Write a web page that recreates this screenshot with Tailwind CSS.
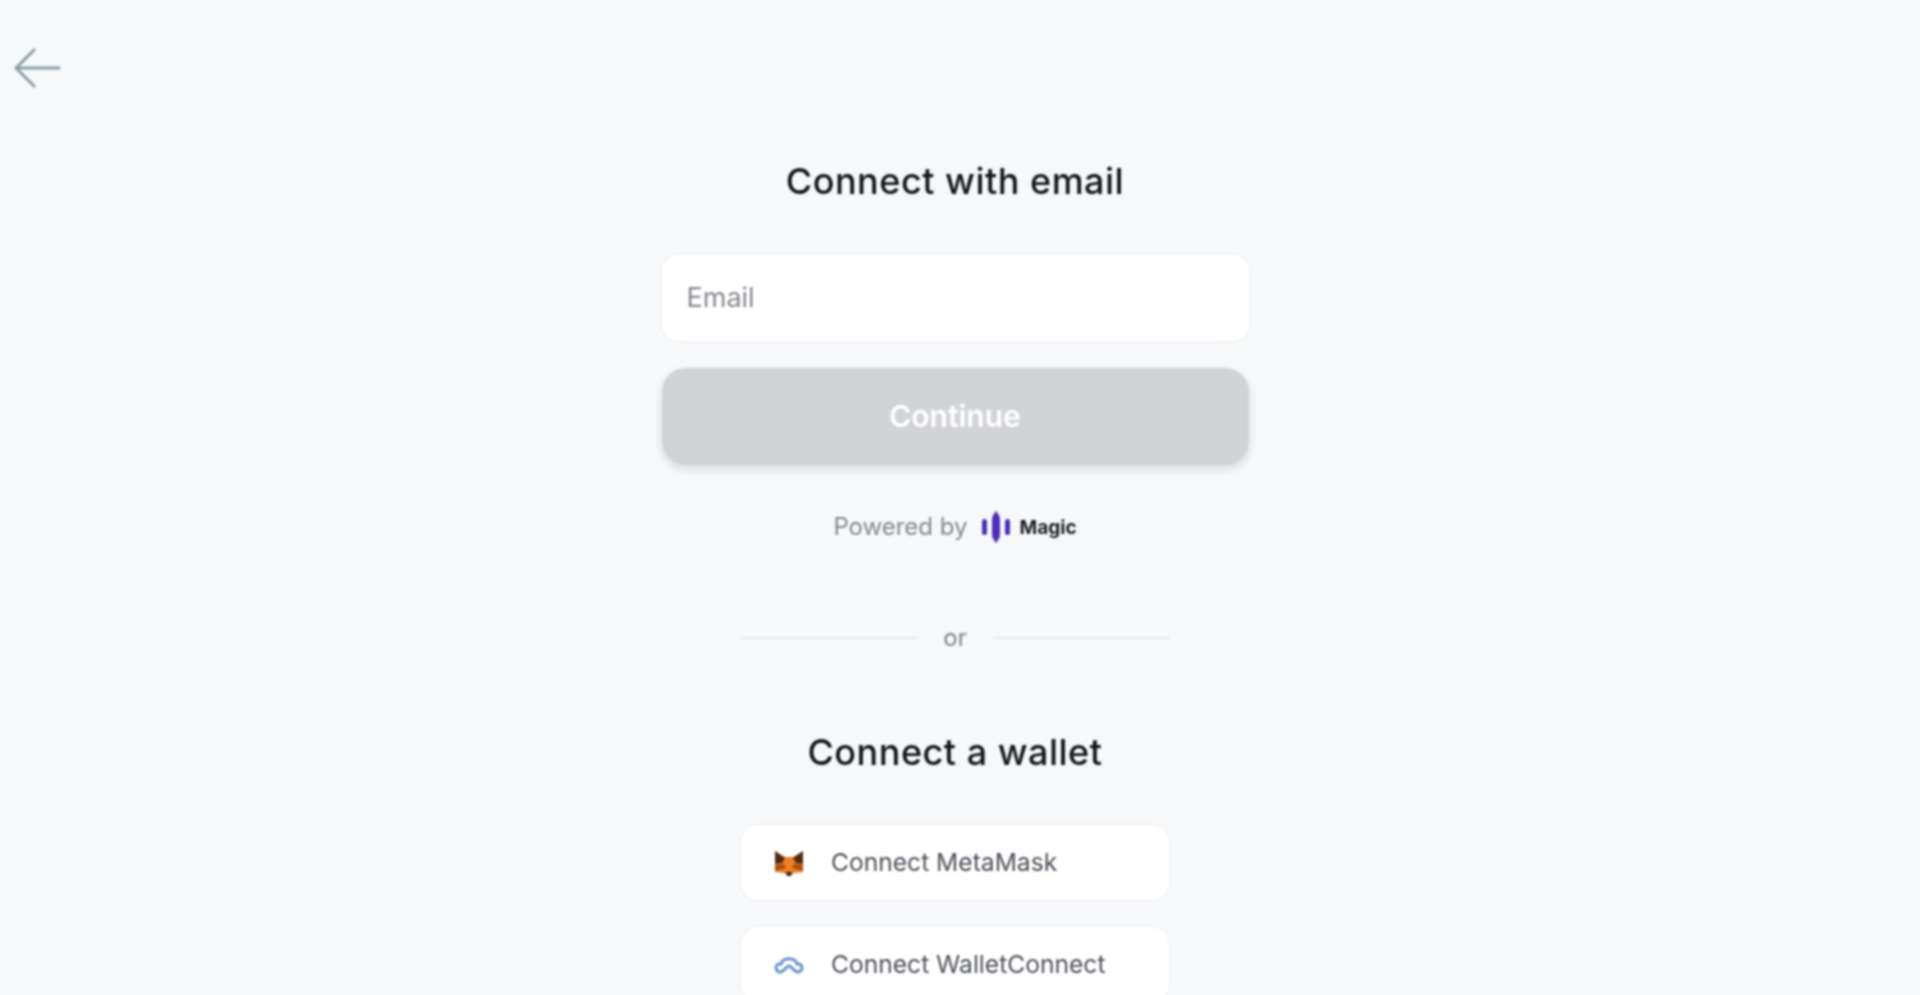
<!DOCTYPE html>
<html lang="en">
<head>
  <meta charset="UTF-8" />
  <title>Connect</title>
  <script src="https://cdn.jsdelivr.net/npm/@tailwindcss/browser@4"></script>
</head>
<body class="bg-[#f6f8fa] h-screen overflow-hidden font-['Inter',sans-serif]">
  <div class="blur-[0.8px]">
    <header class="h-[159px] pt-[46px] pl-[12px]">
      <button type="button" aria-label="Back" class="block text-[#8c9ea6]">
        <svg class="w-[50px] h-[44px]" viewBox="0 0 50 44" fill="none" stroke="currentColor" stroke-width="3" stroke-linecap="round" stroke-linejoin="round">
          <path d="M47 22H4M22 4 4 22l18 18" />
        </svg>
      </button>
    </header>

    <main class="flex flex-col items-center pr-[10px]">
      <section class="w-[587px] flex flex-col items-center">
        <h1 class="text-[36px] leading-[44px] font-medium tracking-[0.5px] text-[#14161a]">Connect with email</h1>
        <input type="text" placeholder="Email" class="mt-[52px] w-full h-[86px] pl-[25px] pr-[25px] pb-[2px] bg-white rounded-[16px] text-[27px] text-[#24272e] placeholder:text-[#85888e] outline-none shadow-[0_0_4px_rgba(30,50,70,0.06)]" />
        <button type="button" class="mt-[27px] w-full h-[97px] rounded-[24px] bg-[#d1d3d6] text-white text-[30px] font-semibold shadow-[0_4px_8px_rgba(30,40,50,0.14)]">Continue</button>
        <div class="mt-[44px] flex items-center text-[#85898f] text-[24px] leading-[32px]">
          <span>Powered by</span>
          <svg class="ml-[13px] w-[30px] h-[34px]" viewBox="0 0 30 34" fill="#4e2fb8">
            <rect x="1" y="9" width="5" height="16" rx="2.5" />
            <path d="M15 1c2 3 4 5 4 8v16c0 3-2 5-4 8-2-3-4-5-4-8V9c0-3 2-5 4-8Z" />
            <rect x="24" y="9" width="5" height="16" rx="2.5" />
          </svg>
          <span class="ml-[9px] pt-[3px] text-[19px] font-bold text-[#1b1d22]">Magic</span>
        </div>
      </section>

      <div class="mt-[78px] w-[428px] flex items-center gap-[26px] text-[#7f8389] text-[24px] leading-[32px]">
        <span class="flex-1 h-[2px] bg-[#e7e9eb]"></span>
        <span>or</span>
        <span class="flex-1 h-[2px] bg-[#e7e9eb]"></span>
      </div>

      <h2 class="mt-[76px] text-[36px] leading-[44px] font-medium tracking-[0.5px] text-[#14161a]">Connect a wallet</h2>

      <div class="mt-[51px] w-[428px] flex flex-col gap-[27px]">
        <button type="button" class="h-[75px] shrink-0 flex items-center px-[33px] bg-white rounded-[18px] text-[24.6px] text-[#4c5058] shadow-[0_0_4px_rgba(30,50,70,0.06)]">
          <svg class="w-[30px] h-[26px]" viewBox="0 0 30 26">
            <path d="M1 1l10 6h8l10-6v21l-9 1-3 2h-4l-3-2-9-1Z" fill="#ee7f27" />
            <path d="M1 1l10 7-3 5-7 1ZM29 1 19 8l3 5 7 1Z" fill="#4f2c12" />
            <path d="M1 15l9-1 2 4-11 3ZM29 15l-9-1-2 4 11 3Z" fill="#a9500f" />
            <path d="M12 22h6l-1 4h-4Z" fill="#33281f" />
          </svg>
          <span class="ml-[27px]">Connect MetaMask</span>
        </button>
        <button type="button" class="h-[75px] shrink-0 flex items-center px-[33px] bg-white rounded-[18px] text-[24.6px] text-[#4c5058] shadow-[0_0_4px_rgba(30,50,70,0.06)]">
          <svg class="w-[30px] h-[22px]" viewBox="0 0 30 22" fill="none" stroke="#6a94cc" stroke-width="3" stroke-linecap="round" stroke-linejoin="round">
            <path d="M7 10C9 3 21 3 23 10" />
            <path d="M7 10H5c-4 0-4 8 1 8 4 0 6-6 9-6s5 6 9 6c5 0 5-8 1-8h-2" />
          </svg>
          <span class="ml-[27px]">Connect WalletConnect</span>
        </button>
      </div>
    </main>
  </div>
</body>
</html>
